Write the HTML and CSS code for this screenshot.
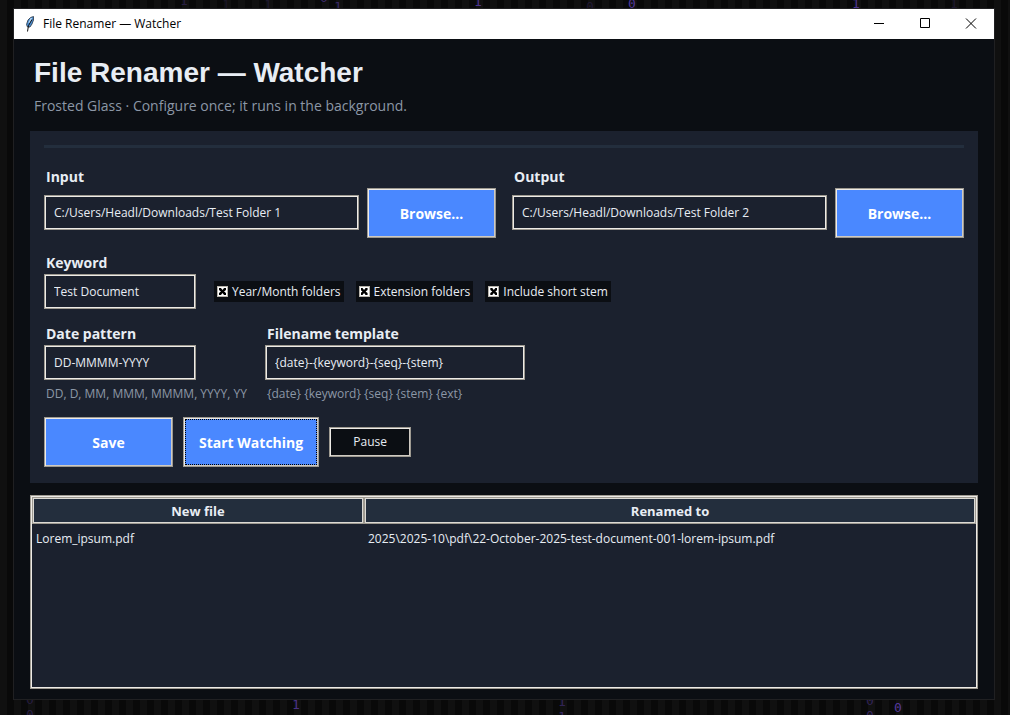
FILE: index.html
```html
<!DOCTYPE html>
<html lang="en">
<head>
<meta charset="utf-8">
<meta name="viewport" content="width=device-width, initial-scale=1">
<title>File Renamer — Watcher</title>
<link rel="stylesheet" href="styles.css">
</head>
<body>
<svg class="rain rain-top" aria-hidden="true">
  <text x="180" y="5" opacity=".35">1</text>
  <text x="222" y="9" opacity=".15">1</text>
  <text x="264" y="9" opacity=".2">1</text>
  <text x="320" y="2" opacity=".7">0</text>
  <text x="334" y="11" opacity=".6">1</text>
  <text x="474" y="6" opacity=".9">1</text>
  <text x="586" y="11" opacity=".25">0</text>
  <text x="628" y="8">0</text>
  <text x="852" y="8" opacity=".9">1</text>
  <text x="950" y="8" opacity=".2">1</text>
</svg>
<svg class="rain rain-bottom" aria-hidden="true">
  <text x="26" y="4" opacity=".35">0</text>
  <text x="26" y="19" opacity=".4">0</text>
  <text x="292" y="9" opacity=".85">1</text>
  <text x="292" y="24" opacity=".8">1</text>
  <text x="558" y="6" opacity=".5">1</text>
  <text x="558" y="21" opacity=".6">1</text>
  <text x="866" y="5" opacity=".5">0</text>
  <text x="866" y="20" opacity=".6">0</text>
  <text x="894" y="12">0</text>
</svg>

<div class="window">
  <header class="titlebar">
    <svg class="feather" viewBox="0 0 10 16" aria-hidden="true">
      <path d="M2.500 11 1.500 8.500 3 4 5.500 1.500 8.500 .5 8.500 4 7 8 5 11Z" fill="#4a8ed2" stroke="#2a3340" stroke-width=".8"/>
      <path d="M6.500 2 4 7" stroke="#b9d8f5" stroke-width="1.500"/>
      <path d="M7 3.500 3.500 9.500 2.500 15.500" fill="none" stroke="#111"/>
    </svg>
    <span class="titlebar-text">File Renamer — Watcher</span>
    <button class="control" type="button" aria-label="Minimize"><svg viewBox="0 0 12 12"><path d="M1 5.500H11"/></svg></button>
    <button class="control" type="button" aria-label="Maximize"><svg viewBox="0 0 12 12"><path d="M1.500 .5H10.500V9.500H1.500Z"/></svg></button>
    <button class="control" type="button" aria-label="Close"><svg viewBox="0 0 12 12"><path d="M1 .5 11 10.500M11 .5 1 10.500"/></svg></button>
  </header>

  <main class="content">
    <div class="heading">
      <h1>File Renamer — Watcher</h1>
      <p>Frosted Glass · Configure once; it runs in the background.</p>
    </div>

    <form class="panel">
      <hr class="rule">
      <div class="folders">
        <div class="field">
          <label for="input">Input</label>
          <div class="picker">
            <input class="entry" id="input" type="text" value="C:/Users/Headl/Downloads/Test Folder 1">
            <button class="btn btn-primary" type="button">Browse…</button>
          </div>
        </div>
        <div class="field">
          <label for="output">Output</label>
          <div class="picker">
            <input class="entry" id="output" type="text" value="C:/Users/Headl/Downloads/Test Folder 2">
            <button class="btn btn-primary" type="button">Browse…</button>
          </div>
        </div>
      </div>

      <div class="options">
        <div class="field field-short">
          <label for="keyword">Keyword</label>
          <input class="entry" id="keyword" type="text" value="Test Document">
        </div>
        <div class="checks">
          <label class="check"><input type="checkbox" checked>Year/Month folders</label>
          <label class="check"><input type="checkbox" checked>Extension folders</label>
          <label class="check"><input type="checkbox" checked>Include short stem</label>
        </div>
      </div>

      <div class="patterns">
        <div class="field">
          <label for="date">Date pattern</label>
          <input class="entry entry-short" id="date" type="text" value="DD-MMMM-YYYY">
          <small>DD, D, MM, MMM, MMMM, YYYY, YY</small>
        </div>
        <div class="field">
          <label for="template">Filename template</label>
          <input class="entry" id="template" type="text" value="{date}-{keyword}-{seq}-{stem}">
          <small>{date} {keyword} {seq} {stem} {ext}</small>
        </div>
      </div>

      <div class="actions">
        <button class="btn btn-primary" type="button">Save</button>
        <button class="btn btn-primary btn-focus" type="button">Start Watching</button>
        <button class="btn btn-small" type="button">Pause</button>
      </div>
    </form>

    <div class="results">
      <table>
        <thead><tr><th class="col-new" scope="col">New file</th><th scope="col">Renamed to</th></tr></thead>
        <tbody><tr><td>Lorem_ipsum.pdf</td><td>2025\2025-10\pdf\22-October-2025-test-document-001-lorem-ipsum.pdf</td></tr></tbody>
      </table>
    </div>
  </main>
</div>
</body>
</html>
```
FILE: styles.css
```css
:root {
  --ink: #e8edf4;
  --panel: #1b212e;
  --base: #0b0e13;
  --bevel-dark: #9e9a91;
  --bevel-light: #eeebe7;
  --accent: #4a88ff;
}

* { box-sizing: border-box; }

body {
  margin: 0;
  min-height: 100vh;
  padding: 8px 15px 15px 13px;
  display: flex;
  position: relative;
  background: repeating-linear-gradient(90deg, #101010 0 7px, #090909 7px 14px);
  color: var(--ink);
  font: 12px/16px "Open Sans", "Noto Sans", sans-serif;
}

.rain {
  position: absolute;
  left: 0;
  width: 100%;
  font: 13px "DejaVu Sans Mono", monospace;
  fill: #53389a;
}
.rain-top { top: 0; height: 8px; }
.rain-bottom { bottom: 0; height: 15px; }

.window {
  flex: 1;
  min-width: 0;
  display: flex;
  flex-direction: column;
  border: 1px solid #202022;
  background: var(--base);
}

.titlebar {
  display: flex;
  align-items: center;
  height: 30px;
  padding-left: 11px;
  background: #fff;
  color: #000;
}
.feather { width: 10px; height: 16px; margin-right: 8px; fill: none; }
.titlebar-text { flex: 1; }
.control {
  width: 46px;
  height: 30px;
  padding: 0;
  border: 0;
  background: none;
  display: grid;
  place-items: center;
}
.control svg { width: 12px; height: 12px; fill: none; stroke: #000; }

.content {
  flex: 1;
  display: flex;
  flex-direction: column;
  padding: 16px 16px 10px;
}
.heading { padding: 0 4px; margin-bottom: 15px; }
h1 { margin: 0 0 5px; font: bold 28px/36px "Liberation Sans", Arial, sans-serif; }
.heading p { margin: 0; font-size: 14px; line-height: 20px; color: #8c97a6; }

.panel { padding: 14px 14px 16px; margin-bottom: 12px; background: var(--panel); }
.rule { height: 3px; margin: 0 0 19px; border: 0; background: #232e3d; }

.folders { display: grid; grid-template-columns: 1fr 1fr; gap: 16px; margin-bottom: 15px; }
.field { display: flex; flex-direction: column; min-width: 0; }
.field > label { padding: 0 0 2px 2px; font-size: 14px; line-height: 19px; font-weight: bold; }
.picker { display: flex; align-items: flex-start; gap: 8px; }
.picker .entry { margin-top: 7px; }

.entry {
  width: 100%;
  min-width: 0;
  height: 35px;
  padding: 0 9px;
  border: 1px solid var(--bevel-dark);
  box-shadow: inset 0 0 0 1px var(--bevel-light);
  outline: 0;
  background: var(--panel);
  color: var(--ink);
  font: inherit;
}
.entry-short, .field-short { width: 152px; }

.options { display: flex; align-items: flex-end; flex-wrap: wrap; gap: 18px; margin-bottom: 15px; }
.checks { display: flex; flex-wrap: wrap; gap: 12px; padding-bottom: 7px; }
.check {
  display: flex;
  align-items: center;
  gap: 4px;
  height: 21px;
  padding: 0 3px;
  background: var(--base);
}
.check input {
  appearance: none;
  width: 11px;
  height: 11px;
  margin: 0;
  border: 1px solid #b9b5ad;
  background: #fff;
  display: grid;
  place-items: center;
}
.check input:checked::before {
  content: "";
  width: 7px;
  height: 7px;
  background: #000;
  clip-path: polygon(0 0, 28% 0, 50% 28%, 72% 0, 100% 0, 100% 28%, 72% 50%, 100% 72%, 100% 100%, 72% 100%, 50% 72%, 28% 100%, 0 100%, 0 72%, 28% 50%, 0 28%);
}

.patterns { display: grid; grid-template-columns: 203px 260px; gap: 18px; margin-bottom: 13px; }
.patterns small {
  margin-top: 4px;
  padding-left: 2px;
  font-size: 12px;
  line-height: 20px;
  white-space: nowrap;
  color: #8c97a6;
}

.actions { display: flex; align-items: center; gap: 10px; }
.btn {
  flex: none;
  border: 1px solid var(--bevel-dark);
  box-shadow: inset 1px 1px var(--bevel-light), inset -1px -1px #cfcac2;
  color: var(--ink);
  font: inherit;
}
.btn-primary {
  min-width: 129px;
  height: 50px;
  padding: 2px 15px 0;
  background: var(--accent);
  color: #fff;
  font-size: 14px;
  font-weight: bold;
}
.btn-focus { outline: 1px dotted #000; outline-offset: -3px; }
.btn-small { width: 82px; height: 30px; padding: 0; background: var(--base); }

.results {
  flex: 1;
  border: 1px solid var(--bevel-dark);
  box-shadow: inset 0 0 0 1px var(--bevel-light);
  padding: 1px;
  background: var(--panel);
}
table { width: 100%; table-layout: fixed; border-collapse: separate; border-spacing: 0; }
.col-new { width: 332px; }
th {
  height: 27px;
  padding: 0;
  border: 1px solid var(--bevel-dark);
  box-shadow: inset 0 0 0 1px #dcdad5;
  background: #232e3d;
  font-size: 13px;
}
td { height: 30px; padding: 0 4px; }
```
